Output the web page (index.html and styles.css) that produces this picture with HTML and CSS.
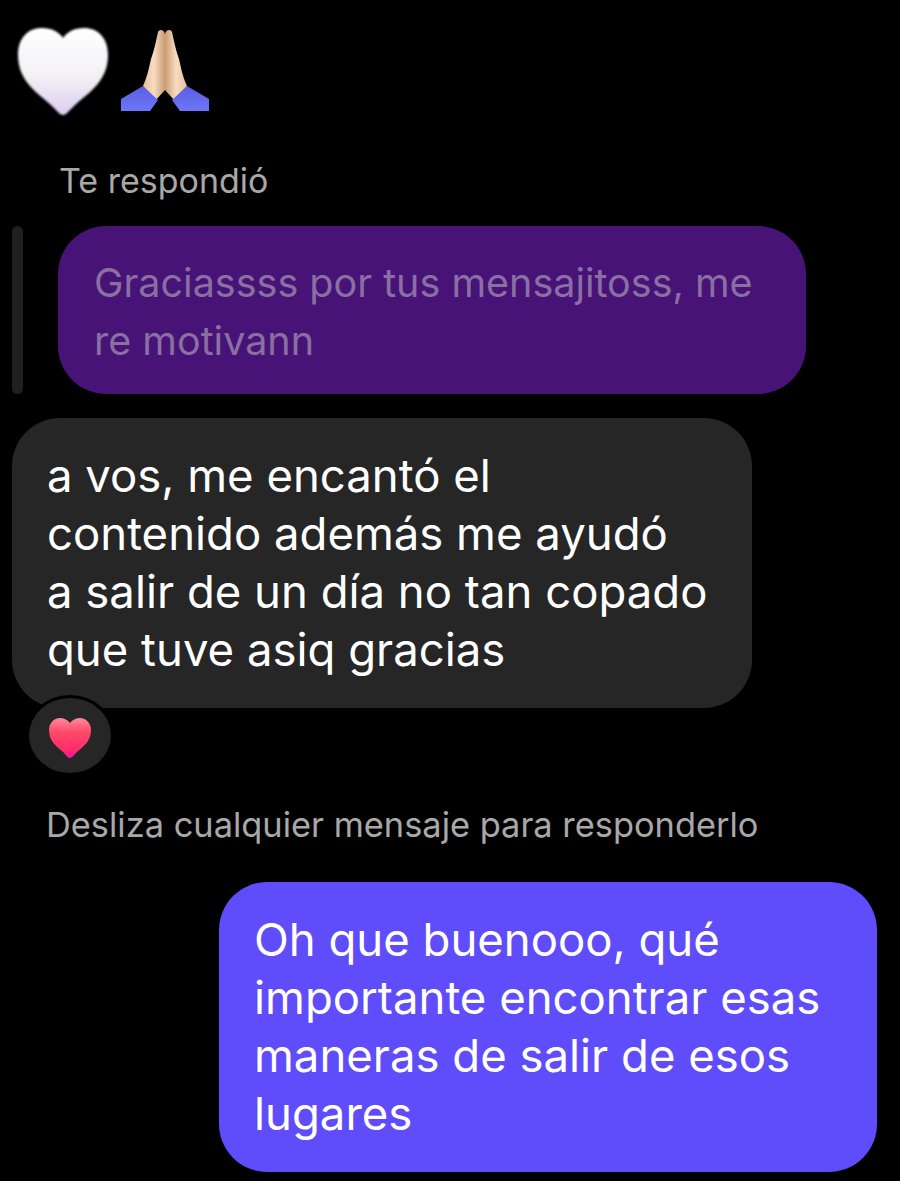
FILE: index.html
```html
<!DOCTYPE html>
<html lang="es">
  <head>
    <meta charset="UTF-8" />
    <meta name="viewport" content="width=device-width, initial-scale=1.0" />
    <title>Chat</title>
    <link rel="stylesheet" href="styles.css">
  </head>
  <body>
    <div class="emoji-row">
      <svg class="heart-big" width="96" height="94" viewBox="0 0 96 94">
        <defs>
          <linearGradient id="whiteHeart" x1="0" y1="0" x2="0" y2="1">
            <stop offset="0" stop-color="#ffffff" />
            <stop offset="0.55" stop-color="#f3f1f4" />
            <stop offset="1" stop-color="#dccdf0" />
          </linearGradient>
          <filter id="soft" x="-10%" y="-10%" width="120%" height="120%">
            <feGaussianBlur stdDeviation="0.8" />
          </filter>
        </defs>
        <path fill="url(#whiteHeart)" filter="url(#soft)" d="M48 91C45 91 42 87 36 81C24 70 3 58 3 31C3 14 13 4 27 4C37 4 44 8 48 14C52 8 59 4 69 4C83 4 93 14 93 31C93 58 72 70 60 81C54 87 51 91 48 91Z" />
      </svg>
      <svg class="hands" width="90" height="84" viewBox="0 0 90 84">
        <defs>
          <linearGradient id="skinL" x1="0" y1="0" x2="1" y2="0">
            <stop offset="0" stop-color="#e6c09c" />
            <stop offset="0.5" stop-color="#f8dcc0" />
            <stop offset="1" stop-color="#c99b73" />
          </linearGradient>
          <linearGradient id="skinR" x1="1" y1="0" x2="0" y2="0">
            <stop offset="0" stop-color="#e6c09c" />
            <stop offset="0.5" stop-color="#f8dcc0" />
            <stop offset="1" stop-color="#c99b73" />
          </linearGradient>
          <linearGradient id="sleeve" x1="0" y1="0" x2="0" y2="1">
            <stop offset="0" stop-color="#5a5ee2" />
            <stop offset="1" stop-color="#6d76f8" />
          </linearGradient>
          <filter id="softHands" x="-5%" y="-5%" width="110%" height="110%">
            <feGaussianBlur stdDeviation="0.4" />
          </filter>
        </defs>
        <g filter="url(#softHands)">
          <path fill="url(#skinL)" d="M45 5C44 0 39 0 38 3C36 12 34 22 31 30C29 38 28 46 23 57L35 72L45 61Z" />
          <path fill="url(#skinR)" d="M45 5C46 0 51 0 52 3C54 12 56 22 59 30C61 38 62 46 67 57L55 72L45 61Z" />
          <path fill="url(#sleeve)" d="M1 70L23 57L38 71L30 82H1Z" />
          <path fill="url(#sleeve)" d="M89 70L67 57L52 71L60 82H89Z" />
        </g>
      </svg>
    </div>

    <p class="reply-label">Te respondió</p>

    <div class="reply-block">
      <div class="reply-bar"></div>
      <div class="bubble bubble-quoted">Graciassss por tus mensajitoss, me re motivann</div>
    </div>

    <div class="bubble bubble-in">a vos, me encantó el<br />contenido además me ayudó<br />a salir de un día no tan copado<br />que tuve asiq gracias</div>

    <div class="reaction">
      <svg width="44" height="42" viewBox="0 0 44 42">
        <defs>
          <linearGradient id="redHeart" x1="0" y1="0" x2="0" y2="1">
            <stop offset="0" stop-color="#ff8a9c" />
            <stop offset="0.35" stop-color="#ff4a68" />
            <stop offset="0.8" stop-color="#ff2c6c" />
            <stop offset="1" stop-color="#f516a0" />
          </linearGradient>
        </defs>
        <path fill="url(#redHeart)" d="M22 41C20 41 18 38 15 35C8 29 1 24 1 13C1 6 6 1 12 1C16 1 20 3 22 6C24 3 28 1 32 1C38 1 43 6 43 13C43 24 36 29 29 35C26 38 24 41 22 41Z" />
      </svg>
    </div>

    <p class="hint">Desliza cualquier mensaje para responderlo</p>

    <div class="outgoing">
      <div class="bubble bubble-out">Oh que buenooo, qué importante encontrar esas maneras de salir de esos lugares</div>
    </div>
  </body>
</html>
```

FILE: styles.css
```css
* {
  margin: 0;
  padding: 0;
  box-sizing: border-box;
}

body {
  font-family: Inter, Roboto, sans-serif;
  background-color: #000;
  height: 1181px;
  overflow: hidden;
  color: #fff;
}

.emoji-row {
  display: flex;
  align-items: center;
  gap: 9px;
  padding: 24px 0 0 15px;
  height: 118px;
}

.reply-label {
  font-size: 34px;
  line-height: 40px;
  color: #a8a8a8;
  margin: 43px 0 0 59px;
}

.reply-block {
  display: flex;
  gap: 35px;
  margin: 25px 0 0 12px;
}

.reply-bar {
  width: 11px;
  background-color: #202020;
  border-radius: 6px;
}

.bubble {
  font-size: 45.5px;
  line-height: 58px;
  border-radius: 48px;
  padding: 29px 35px;
}

.bubble-quoted {
  width: 748px;
  height: 168px;
  padding: 28px 36px;
  font-size: 39.5px;
  background-color: #471377;
  color: #8a6fa3;
}

.bubble-in {
  width: 740px;
  height: 290px;
  margin: 24px 0 0 12px;
  background-color: #262626;
}

.reaction {
  width: 88px;
  height: 81px;
  margin: -13px 0 0 26px;
  padding-top: 4px;
  position: relative;
  display: flex;
  align-items: center;
  justify-content: center;
  background-color: #262626;
  border: 3px solid #000;
  border-radius: 50%;
}

.hint {
  font-size: 34.4px;
  line-height: 40px;
  color: #a8a8a8;
  margin: 29px 0 0 46px;
}

.outgoing {
  display: flex;
  justify-content: flex-end;
  margin: 37px 23px 0 0;
}

.bubble-out {
  width: 658px;
  height: 290px;
  background-color: #5f4cfb;
}
```
